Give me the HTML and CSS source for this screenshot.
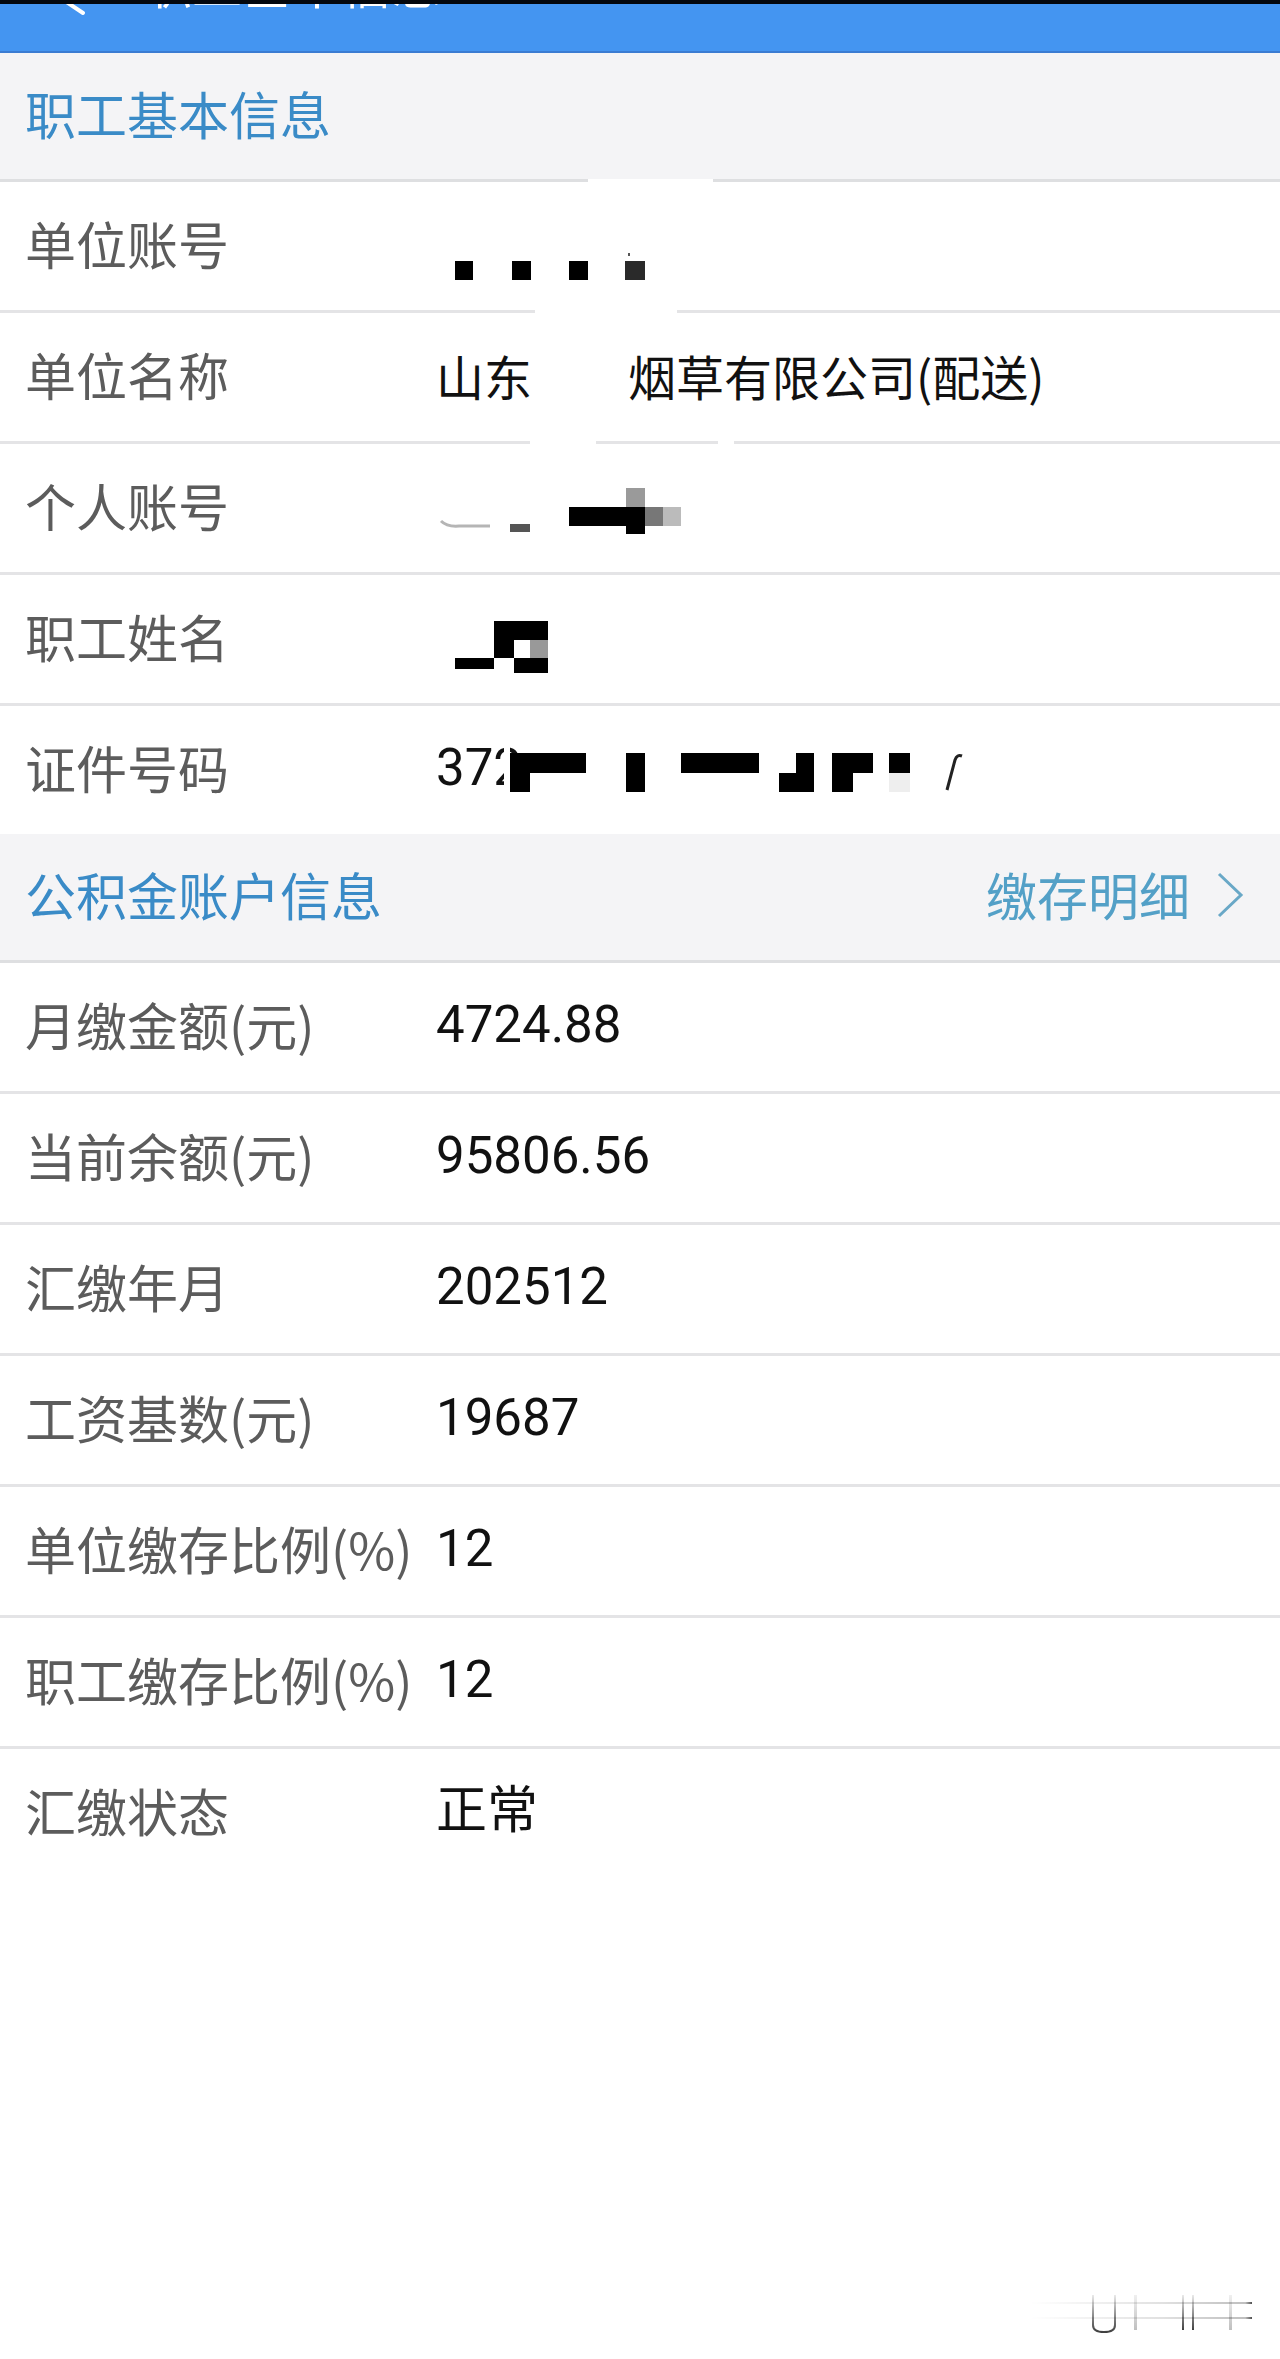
FILE: index.html
```html
<!DOCTYPE html>
<html lang="zh-CN">
<head>
<meta charset="utf-8">
<title>职工基本信息</title>
<link rel="stylesheet" href="styles.css">
</head>
<body>
<div class="page">
  <header class="topbar">
    <svg class="back" viewBox="0 0 50 54" width="50" height="54"><polyline points="43,10 16,30 43,48" fill="none" stroke="#fff" stroke-width="4" stroke-linecap="round" stroke-linejoin="round"/></svg>
    <span class="title">职工基本信息</span>
  </header>

  <div class="sec-head">
    <span class="sec-title">职工基本信息</span>
    <span class="gap g1"></span>
  </div>

  <div class="row">
    <span class="label">单位账号</span>
    <span class="val"></span>
    <svg class="mask" viewBox="0 0 560 128">
      <rect x="22" y="79" width="18" height="19" fill="#000"/>
      <rect x="79" y="79" width="19" height="19" fill="#000"/>
      <rect x="136" y="79" width="19" height="19" fill="#000"/>
      <rect x="192" y="79" width="20" height="19" fill="#2a2a2a"/>
      <rect x="195" y="71" width="2" height="3" fill="#555"/>
    </svg>
    <span class="gap g2"></span>
  </div>

  <div class="row">
    <span class="label">单位名称</span>
    <span class="val cjk">山东<span class="blank"></span>烟草有限公司(配送)</span>
    <span class="gap g3"></span>
    <span class="gap g4"></span>
  </div>

  <div class="row">
    <span class="label">个人账号</span>
    <span class="val"></span>
    <svg class="mask" viewBox="0 0 560 128">
      <path d="M8 77 Q14 83 26 82 L57 82" fill="none" stroke="#b5b5b5" stroke-width="3"/>
      <rect x="77" y="80" width="20" height="8" fill="#555"/>
      <rect x="136" y="63" width="57" height="19" fill="#000"/>
      <rect x="193" y="44" width="19" height="19" fill="#9a9a9a"/>
      <rect x="193" y="63" width="19" height="27" fill="#000"/>
      <rect x="212" y="63" width="18" height="19" fill="#777"/>
      <rect x="230" y="63" width="18" height="19" fill="#bbb"/>
    </svg>
  </div>

  <div class="row">
    <span class="label">职工姓名</span>
    <span class="val"></span>
    <svg class="mask" viewBox="0 0 560 128">
      <rect x="61" y="46" width="54" height="19" fill="#000"/>
      <rect x="61" y="65" width="20" height="18" fill="#000"/>
      <rect x="97" y="65" width="18" height="18" fill="#999"/>
      <rect x="22" y="83" width="39" height="11" fill="#000"/>
      <rect x="81" y="83" width="34" height="15" fill="#000"/>
    </svg>
  </div>

  <div class="row last">
    <span class="label">证件号码</span>
    <span class="val">372</span>
    <svg class="mask" viewBox="0 0 560 128">
      <rect x="71" y="38" width="6" height="58" fill="#fff"/>
      <rect x="77" y="47" width="20" height="39" fill="#000"/>
      <rect x="97" y="47" width="56" height="20" fill="#000"/>
      <rect x="193" y="47" width="19" height="39" fill="#000"/>
      <rect x="248" y="47" width="78" height="20" fill="#000"/>
      <rect x="346" y="67" width="17" height="19" fill="#000"/>
      <rect x="363" y="47" width="18" height="39" fill="#000"/>
      <rect x="399" y="47" width="21" height="39" fill="#000"/>
      <rect x="420" y="47" width="20" height="20" fill="#000"/>
      <rect x="456" y="47" width="21" height="20" fill="#000"/>
      <rect x="456" y="67" width="21" height="19" fill="#eee"/>
      <path d="M514 84 L522 54 Q524 48 529 50" fill="none" stroke="#222" stroke-width="3"/>
    </svg>
  </div>

  <div class="sec-head">
    <span class="sec-title">公积金账户信息</span>
    <span class="link">缴存明细<svg class="chev" viewBox="0 0 28 46" width="28" height="46"><polyline points="3,2 25,23 3,44" fill="none" stroke="#69a8c7" stroke-width="3"/></svg></span>
  </div>

  <div class="row"><span class="label">月缴金额(元)</span><span class="val">4724.88</span></div>
  <div class="row"><span class="label">当前余额(元)</span><span class="val">95806.56</span></div>
  <div class="row"><span class="label">汇缴年月</span><span class="val">202512</span></div>
  <div class="row"><span class="label">工资基数(元)</span><span class="val">19687</span></div>
  <div class="row"><span class="label">单位缴存比例(%)</span><span class="val">12</span></div>
  <div class="row"><span class="label">职工缴存比例(%)</span><span class="val">12</span></div>
  <div class="row last"><span class="label">汇缴状态</span><span class="val">正常</span></div>

  <svg class="wm" viewBox="0 0 250 60">
    <defs>
      <linearGradient id="hl" x1="0" x2="1" y1="0" y2="0">
        <stop offset="0" stop-color="#000" stop-opacity="0"/>
        <stop offset="0.6" stop-color="#000" stop-opacity="0.12"/>
        <stop offset="0.97" stop-color="#000" stop-opacity="0.25"/>
        <stop offset="1" stop-color="#000" stop-opacity="0.7"/>
      </linearGradient>
      <linearGradient id="vl" x1="0" x2="0" y1="0" y2="1">
        <stop offset="0" stop-color="#000" stop-opacity="0.08"/>
        <stop offset="1" stop-color="#000" stop-opacity="0.75"/>
      </linearGradient>
      <linearGradient id="vf" x1="0" x2="0" y1="0" y2="1">
        <stop offset="0" stop-color="#000" stop-opacity="0.06"/>
        <stop offset="1" stop-color="#000" stop-opacity="0.25"/>
      </linearGradient>
    </defs>
    <rect x="0" y="17" width="222" height="2" fill="url(#hl)"/>
    <rect x="0" y="32" width="222" height="2" fill="url(#hl)"/>
    <path d="M63 10 L63 40 Q63 47 74 47 Q85 47 85 40 L85 10" fill="none" stroke="url(#vl)" stroke-width="2"/>
    <rect x="104" y="10" width="3" height="35" fill="url(#vf)"/>
    <rect x="152" y="10" width="2" height="35" fill="url(#vl)"/>
    <rect x="162" y="10" width="2" height="35" fill="url(#vl)"/>
    <rect x="199" y="10" width="3" height="35" fill="url(#vf)"/>
  </svg>
</div>
</body>
</html>
```

FILE: styles.css
```css
* { box-sizing: border-box; }

html, body {
  margin: 0;
  padding: 0;
  background: #ffffff;
}

.page {
  position: relative;
  width: 1280px;
  min-height: 2359px;
  background: #ffffff;
  font-family: "Noto Sans CJK SC", "Noto Sans", sans-serif;
}

.topbar {
  height: 53px;
  display: flex;
  align-items: flex-start;
  overflow: hidden;
  background: #4495f1;
  border-top: 4px solid #03070e;
  border-bottom: 2px solid #3b7cd2;
}

.back {
  display: block;
  flex: none;
  margin-top: -39px;
  margin-left: 40px;
}

.title {
  margin-top: -47px;
  margin-left: 52px;
  font-size: 50px;
  line-height: 50px;
  color: #ffffff;
  white-space: nowrap;
}

.sec-head {
  position: relative;
  height: 129px;
  display: flex;
  align-items: center;
  justify-content: space-between;
  padding: 0 36px 0 25px;
  background: #f4f4f6;
  border-bottom: 3px solid #dedfe1;
}

.sec-title {
  font-size: 51px;
  line-height: 1.2;
  color: #3a8bc7;
  white-space: nowrap;
  padding-bottom: 4px;
}

.link {
  display: flex;
  align-items: center;
  font-size: 51px;
  line-height: 1.2;
  color: #53a0c7;
  white-space: nowrap;
  padding-bottom: 4px;
}

.chev {
  display: block;
  margin-left: 26px;
}

.row {
  position: relative;
  height: 131px;
  display: grid;
  grid-template-columns: 408px 1fr;
  align-items: center;
  padding-left: 25px;
  border-bottom: 3px solid #e4e4e6;
}

.row.last {
  height: 128px;
  border-bottom: none;
}

.label {
  font-size: 51px;
  line-height: 1.2;
  color: #5c5c5c;
  white-space: nowrap;
  padding-bottom: 4px;
}

.val {
  font-family: Roboto, "Noto Sans CJK SC", sans-serif;
  font-size: 51px;
  line-height: 1.2;
  color: #111111;
  white-space: nowrap;
  padding-left: 3px;
  padding-bottom: 4px;
}

.val.cjk {
  font-family: "Noto Sans CJK SC", sans-serif;
  font-size: 48px;
  padding-bottom: 2px;
}

.blank {
  display: inline-block;
  width: 96px;
}

.mask {
  position: absolute;
  left: 433px;
  top: 0;
  width: 560px;
  height: 128px;
}

.gap {
  position: absolute;
  bottom: -3px;
  height: 3px;
  background: #ffffff;
}

.g1 { left: 588px; width: 125px; }
.g2 { left: 535px; width: 142px; }
.g3 { left: 530px; width: 66px; }
.g4 { left: 718px; width: 16px; }

.wm {
  position: absolute;
  right: 0;
  bottom: 14px;
  width: 250px;
  height: 60px;
}
```
